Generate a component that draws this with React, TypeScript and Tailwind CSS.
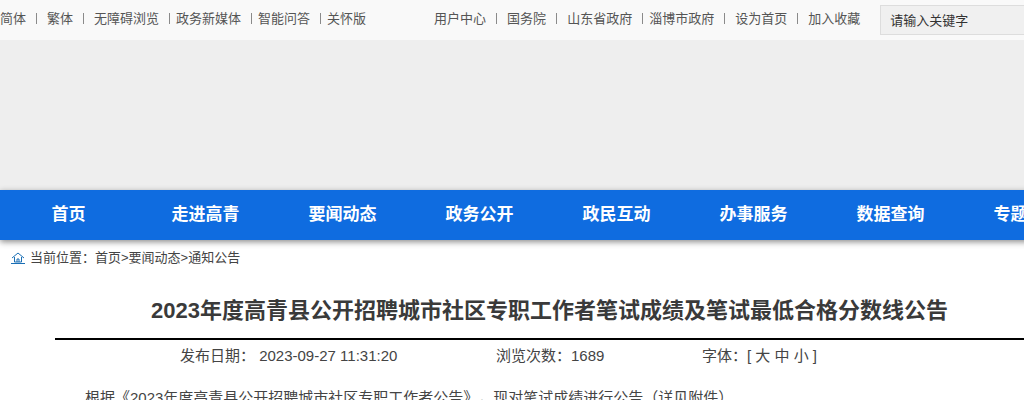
const FONT = "font-['Liberation_Sans','Noto_Sans_CJK_SC',sans-serif]";

function Sep({ className = "" }: { className?: string }) {
  return <span className={`w-px h-[11px] bg-[#8a8a8a] shrink-0 ${className}`} />;
}

const navItems = ["首页", "走进高青", "要闻动态", "政务公开", "政民互动", "办事服务", "数据查询", "专题专栏"];

export default function App() {
  return (
    <div className={`w-[1024px] h-[400px] overflow-hidden bg-white ${FONT}`}>
      <div className="h-[40px] bg-[#f9f9f9] flex items-start text-[13px] text-[#555] w-[1100px]">
        <div className="flex items-center h-[37px]">
          <span>简体</span>
          <Sep className="ml-[10px] mr-[10px]" />
          <span>繁体</span>
          <Sep className="ml-[10px] mr-[10px]" />
          <span>无障碍浏览</span>
          <Sep className="ml-[10px] mr-[6px]" />
          <span>政务新媒体</span>
          <Sep className="ml-[10px] mr-[6px]" />
          <span>智能问答</span>
          <Sep className="ml-[10px] mr-[6px]" />
          <span>关怀版</span>
        </div>
        <div className="flex items-center h-[37px] ml-[68px]">
          <span>用户中心</span>
          <Sep className="ml-[10px] mr-[10px]" />
          <span>国务院</span>
          <Sep className="ml-[10px] mr-[10px]" />
          <span>山东省政府</span>
          <Sep className="ml-[10px] mr-[6px]" />
          <span>淄博市政府</span>
          <Sep className="ml-[10px] mr-[10px]" />
          <span>设为首页</span>
          <Sep className="ml-[10px] mr-[10px]" />
          <span>加入收藏</span>
        </div>
        <div className="ml-[20px] mt-[5px] w-[200px] h-[30px] bg-[#f0f0f0] border border-[#dddddd] pl-[10px] pt-[2px] flex items-center text-[#333] shrink-0 -indent-px">
          请输入关键字
        </div>
      </div>
      <div className="h-[150px] bg-[#eeeeee]" />
      <div className="h-[50px] bg-[#0f6ce0] shadow-[0_2px_6px_rgba(0,0,0,0.45)] flex w-[1160px] relative">
        {navItems.map((t) => (
          <div key={t} className="w-[137px] shrink-0 flex items-center justify-center text-white font-bold text-[17px]">
            {t}
          </div>
        ))}
      </div>
      <div className="h-[35px] flex items-center pl-[11px] text-[13px] text-[#444] pt-[1px]">
        <svg width="14" height="12" viewBox="0 0 14 12" fill="none" stroke="#1a6fb5" strokeWidth="1" className="mr-[5px]">
          <path d="M1 6 L7 1 L13 6" />
          <path d="M3.5 5 V10 H10.5 V5" />
          <path d="M6 10 V7 H8 V10" />
          <path d="M0 11.5 H14" />
        </svg>
        <span>当前位置：</span>
        <span>首页&gt;要闻动态&gt;通知公告</span>
      </div>
      <div className="ml-[55px] w-[989px]">
        <h1 className="h-[65px] pt-[8px] flex items-center justify-center text-[22px] leading-none font-bold text-[#3a3a3a] border-b-2 border-black">
          2023年度高青县公开招聘城市社区专职工作者笔试成绩及笔试最低合格分数线公告
        </h1>
        <div className="h-[33px] flex items-center text-[15px] text-[#444] pl-[125px]">
          <span className="w-[316px]">发布日期：&nbsp;2023-09-27 11:31:20</span>
          <span className="w-[206px]">浏览次数：1689</span>
          <span>字体：[ 大 中 小 ]</span>
        </div>
        <p className="mt-[10px] ml-[30px] text-[15px] leading-[30px] text-[#444] whitespace-nowrap [text-spacing-trim:space-all]">
          根据《2023年度高青县公开招聘城市社区专职工作者公告》，现对笔试成绩进行公告（详见附件）。
        </p>
      </div>
    </div>
  );
}
